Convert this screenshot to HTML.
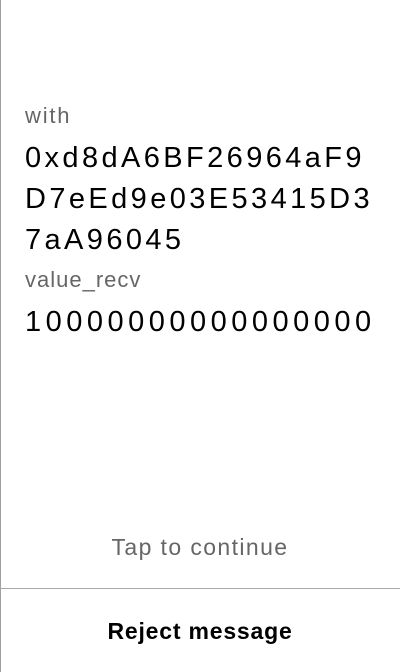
<!DOCTYPE html>
<html><head><style>
html,body{margin:0;padding:0;}
body{width:400px;height:672px;position:relative;background:#fff;font-family:"Liberation Sans",sans-serif;overflow:hidden;}
.lb{position:absolute;left:0;top:0;width:1px;height:672px;background:#a0a0a0;}
.t{position:absolute;left:25px;white-space:nowrap;line-height:1;}
.lab{font-size:22px;color:#666;}
.big{font-size:29px;color:#000;letter-spacing:3.4px;}
.c{position:absolute;left:0;width:400px;text-align:center;line-height:1;}
.hr{position:absolute;left:0;top:588px;width:400px;height:1px;background:#a8a8a8;}
</style></head><body>
<div class="lb"></div>
<div class="t lab" style="top:105px;letter-spacing:1.8px">with</div>
<div class="t big" style="top:144px">0xd8dA6BF26964aF9</div>
<div class="t big" style="top:185px">D7eEd9e03E53415D3</div>
<div class="t big" style="top:226px">7aA96045</div>
<div class="t lab" style="top:269px;letter-spacing:1px">value_recv</div>
<div class="t big" style="top:308px;letter-spacing:4.5px">10000000000000000</div>
<div class="c" style="top:536px;font-size:23px;color:#666;letter-spacing:1.4px">Tap to continue</div>
<div class="hr"></div>
<div class="c" style="top:620px;font-size:23px;font-weight:bold;color:#000;letter-spacing:0.8px">Reject message</div>
</body></html>
